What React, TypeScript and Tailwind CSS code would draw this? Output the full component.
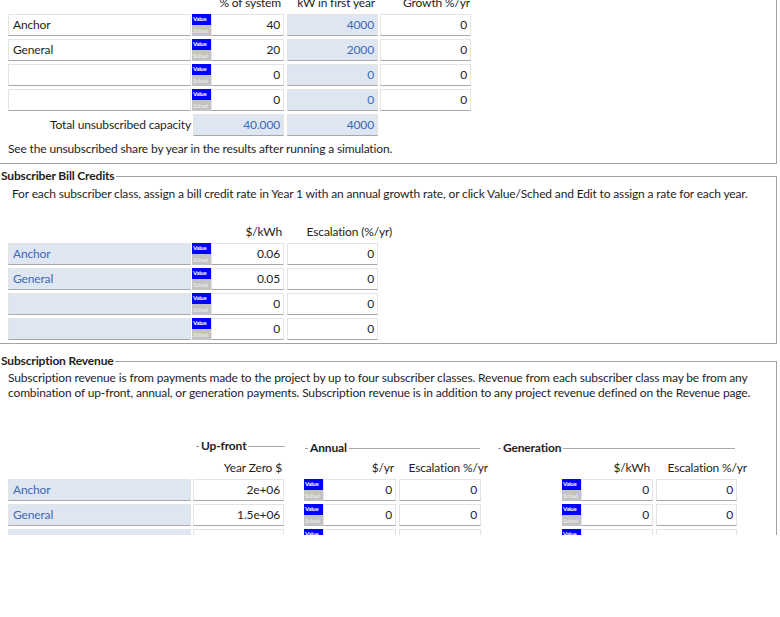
import React from "react";

type FieldProps = { text?: string; blue?: boolean; w: string; left?: boolean };

function Field({ text = "", blue = false, w, left = false }: FieldProps) {
  return (
    <div
      className={`${w} h-[22px] shrink-0 flex items-center pl-[4px] pr-[3px] border border-[#e4e4e4] border-b-[#a8a8a8] ${
        left ? "justify-start" : "justify-end"
      } ${blue ? "bg-[#dde6f1] text-[#4169b5]" : "bg-white text-[#1e1e1e]"}`}
    >
      <span className="leading-none whitespace-nowrap">{text}</span>
    </div>
  );
}

function ValueSched() {
  return (
    <div className="w-[19px] h-[22px] shrink-0 flex flex-col tracking-normal">
      <div className="h-[11px] bg-[#0000ff] text-white text-[6px] font-bold leading-[10px] pl-px tracking-tighter">
        Value
      </div>
      <div className="h-[11px] bg-[#c3c3c3] text-[#e6e6e6] text-[6px] font-bold leading-[11px] pl-px tracking-tighter">
        Sched
      </div>
    </div>
  );
}

function PanelTitle({ title }: { title: string }) {
  return (
    <div className="flex h-[16px]">
      <span className="pl-[2px] pr-px font-bold leading-[16px] whitespace-nowrap">{title}</span>
      <div className="flex-1 mt-[8px] border-t border-r border-[#a3a3a3]" />
    </div>
  );
}

function GroupTitle({ title, cls }: { title: string; cls: string }) {
  return (
    <div className={`${cls} flex items-center h-[16px]`}>
      <div className="w-[3px] h-px bg-[#9a9a9a]" />
      <span className="px-[2px] font-bold leading-[16px]">{title}</span>
      <div className="flex-1 h-px bg-[#a8a8a8]" />
    </div>
  );
}

const subscribers = [
  { name: "Anchor", pct: "40", kw: "4000", growth: "0" },
  { name: "General", pct: "20", kw: "2000", growth: "0" },
  { name: "", pct: "0", kw: "0", growth: "0" },
  { name: "", pct: "0", kw: "0", growth: "0" },
];

const credits = [
  { name: "Anchor", rate: "0.06", esc: "0" },
  { name: "General", rate: "0.05", esc: "0" },
  { name: "", rate: "0", esc: "0" },
  { name: "", rate: "0", esc: "0" },
];

const revenue = [
  { name: "Anchor", upfront: "2e+06", annual: "0", annEsc: "0", gen: "0", genEsc: "0" },
  { name: "General", upfront: "1.5e+06", annual: "0", annEsc: "0", gen: "0", genEsc: "0" },
  { name: "", upfront: "", annual: "", annEsc: "", gen: "", genEsc: "" },
];

export default function App() {
  return (
    <div className="w-[780px] h-[617px] bg-white overflow-hidden font-['Lato',sans-serif] text-[12px] tracking-[-0.15px] text-[#1e1e1e]">
      <div className="h-[535px] overflow-hidden">
        <div className="ml-[-1px] w-[778px]">
          {/* Subscriber capacity table */}
          <div className="border-l border-r border-b border-[#a3a3a3] pb-[6px]">
            <div className="flex h-[14px] -mt-[4px] leading-[14px] whitespace-nowrap">
              <div className="w-[281px] text-right">% of system</div>
              <div className="w-[94px] text-right">kW in first year</div>
              <div className="w-[95px] text-right">Growth %/yr</div>
            </div>
            <div className="mt-[4px] pl-[8px] flex flex-col gap-[3px]">
              {subscribers.map((s, i) => (
                <div key={i} className="flex">
                  <Field w="w-[183px]" left text={s.name} />
                  <div className="ml-px">
                    <ValueSched />
                  </div>
                  <Field w="w-[73px]" text={s.pct} />
                  <div className="ml-[3px]">
                    <Field w="w-[91px]" blue text={s.kw} />
                  </div>
                  <div className="ml-[2px]">
                    <Field w="w-[91px]" text={s.growth} />
                  </div>
                </div>
              ))}
              <div className="flex items-center">
                <div className="w-[183px] text-right whitespace-nowrap">Total unsubscribed capacity</div>
                <div className="ml-[2px]">
                  <Field w="w-[91px]" blue text="40.000" />
                </div>
                <div className="ml-[3px]">
                  <Field w="w-[91px]" blue text="4000" />
                </div>
              </div>
            </div>
            <p className="mt-[5px] pl-[8px] leading-[16px]">
              See the unsubscribed share by year in the results after running a simulation.
            </p>
          </div>

          {/* Subscriber Bill Credits */}
          <div className="mt-[4px]">
            <PanelTitle title="Subscriber Bill Credits" />
            <div className="border-l border-r border-b border-[#a3a3a3] pt-[2px] pb-[3px]">
              <p className="pl-[12px] leading-[16px] whitespace-nowrap">
                For each subscriber class, assign a bill credit rate in Year 1 with an annual growth rate, or click
                Value/Sched and Edit to assign a rate for each year.
              </p>
              <div className="mt-[22px] flex h-[16px] leading-[16px] whitespace-nowrap">
                <div className="w-[282px] text-right">$/kWh</div>
                <div className="w-[110px] text-right">Escalation (%/yr)</div>
              </div>
              <div className="mt-[3px] pl-[8px] flex flex-col gap-[3px]">
                {credits.map((c, i) => (
                  <div key={i} className="flex">
                    <Field w="w-[183px]" left blue text={c.name} />
                    <div className="ml-px">
                      <ValueSched />
                    </div>
                    <Field w="w-[73px]" text={c.rate} />
                    <div className="ml-[3px]">
                      <Field w="w-[91px]" text={c.esc} />
                    </div>
                  </div>
                ))}
              </div>
            </div>
          </div>

          {/* Subscription Revenue */}
          <div className="mt-[9px]">
            <PanelTitle title="Subscription Revenue" />
            <div className="border-l border-r border-[#a3a3a3] pt-px h-[300px]">
              <p className="pl-[8px] leading-[15px] whitespace-nowrap">
                Subscription revenue is from payments made to the project by up to four subscriber classes. Revenue
                from each subscriber class may be from any
                <br />
                combination of up-front, annual, or generation payments. Subscription revenue is in addition to any
                project revenue defined on the Revenue page.
              </p>
              <div className="mt-[38px] flex items-start">
                <GroupTitle title="Up-front" cls="ml-[196px] w-[89px]" />
                <GroupTitle title="Annual" cls="ml-[20px] w-[175px] mt-[2px]" />
                <GroupTitle title="Generation" cls="ml-[18px] w-[237px] mt-[2px]" />
              </div>
              <div className="mt-[4px] flex h-[16px] leading-[16px] whitespace-nowrap">
                <div className="w-[282px] text-right">Year Zero $</div>
                <div className="w-[112px] text-right">$/yr</div>
                <div className="w-[94px] text-right">Escalation %/yr</div>
                <div className="w-[162px] text-right">$/kWh</div>
                <div className="w-[97px] text-right">Escalation %/yr</div>
              </div>
              <div className="mt-[3px] pl-[8px] flex flex-col gap-[3px]">
                {revenue.map((r, i) => (
                  <div key={i} className="flex">
                    <Field w="w-[183px]" left blue text={r.name} />
                    <div className="ml-[2px]">
                      <Field w="w-[91px]" text={r.upfront} />
                    </div>
                    <div className="ml-[20px]">
                      <ValueSched />
                    </div>
                    <Field w="w-[73px]" text={r.annual} />
                    <div className="ml-[3px]">
                      <Field w="w-[82px]" text={r.annEsc} />
                    </div>
                    <div className="ml-[81px]">
                      <ValueSched />
                    </div>
                    <Field w="w-[72px]" text={r.gen} />
                    <div className="ml-[3px]">
                      <Field w="w-[81px]" text={r.genEsc} />
                    </div>
                  </div>
                ))}
              </div>
            </div>
          </div>
        </div>
      </div>
    </div>
  );
}
